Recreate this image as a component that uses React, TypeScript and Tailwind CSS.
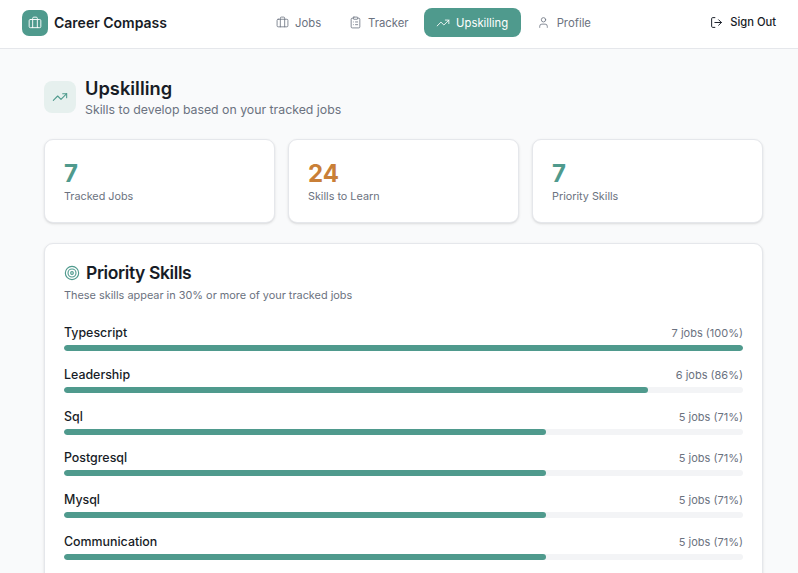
import { Briefcase, ClipboardList, TrendingUp, User, LogOut, Target } from "lucide-react";

const skills = [
  ["Typescript", "7 jobs (100%)", 100],
  ["Leadership", "6 jobs (86%)", 86],
  ["Sql", "5 jobs (71%)", 71],
  ["Postgresql", "5 jobs (71%)", 71],
  ["Mysql", "5 jobs (71%)", 71],
  ["Communication", "5 jobs (71%)", 71],
] as const;

const stats = [
  ["7", "Tracked Jobs", "text-[#4f9a8d]"],
  ["24", "Skills to Learn", "text-[#c97f37]"],
  ["7", "Priority Skills", "text-[#4f9a8d]"],
] as const;

export default function App() {
  return (
    <div className="h-[573px] overflow-hidden bg-[#f9fafb] font-['Inter',sans-serif] text-[#171c26]">
      <header className="flex h-[49px] items-center border-b border-[#e5e7eb] bg-white pb-[3px] pl-[22px] pr-[22px]">
        <div className="flex w-[240px] items-center gap-[6px]">
          <div className="flex h-[26px] w-[26px] items-center justify-center rounded-[7px] bg-[#4f9a8d] text-white">
            <Briefcase size={14} strokeWidth={1.6} />
          </div>
          <span className="text-[14px] font-semibold">Career Compass</span>
        </div>
        <nav className="flex items-center text-[11.3px] font-normal leading-[15px] text-[#6b7280]">
          <a className="flex h-[29px] items-center gap-[6px] px-[14px]"><Briefcase size={13} strokeWidth={1.5} /><span className="mt-px">Jobs</span></a>
          <a className="flex h-[29px] items-center gap-[6px] px-[14px]"><ClipboardList size={13} strokeWidth={1.5} /><span className="mt-px">Tracker</span></a>
          <a className="ml-px flex h-[29px] items-center gap-[6px] rounded-[8px] bg-[#4f9a8d] px-[12.5px] text-white"><TrendingUp size={14} strokeWidth={1.5} /><span className="mt-px">Upskilling</span></a>
          <a className="flex h-[29px] items-center gap-[7px] px-[16px]"><User size={13} strokeWidth={1.5} /><span className="mt-px">Profile</span></a>
        </nav>
        <button className="ml-auto flex items-center gap-[7px] whitespace-nowrap text-[11.2px] font-medium">
          <LogOut size={13} strokeWidth={1.8} />Sign Out
        </button>
      </header>
      <main className="flex flex-col gap-5 pl-11 pr-[35px] pt-[30px]">
        <div className="flex items-start gap-[9px]">
          <div className="mt-[2px] flex h-8 w-8 items-center justify-center rounded-[8px] bg-[#e6f0ee] text-[#4f9a8d]">
            <TrendingUp size={16} strokeWidth={1.6} />
          </div>
          <div>
            <h1 className="text-[18.3px] font-semibold leading-[18px]">Upskilling</h1>
            <p className="mt-[4px] text-[12.3px] leading-[18px] text-[#6b7280]">Skills to develop based on your tracked jobs</p>
          </div>
        </div>
        <div className="grid grid-cols-3 gap-[13px]">
          {stats.map(([n, l, c]) => (
            <div key={l} className="h-[84px] rounded-[9px] border border-[#e5e7eb] bg-white px-[19px] pt-[19px] shadow-sm">
              <div className={`text-[24px] font-bold leading-[30px] ${c}`}>{n}</div>
              <div className="text-[10.8px] leading-[16px] text-[#6b7280]">{l}</div>
            </div>
          ))}
        </div>
        <section className="rounded-[9px] border border-[#e5e7eb] bg-white px-[19px] pb-10 pt-[18px] shadow-sm">
          <div className="flex items-center gap-[6px]">
            <Target size={16} strokeWidth={1.7} className="text-[#4f9a8d]" />
            <h2 className="text-[17.5px] font-semibold leading-[22px] tracking-[-0.4px]">Priority Skills</h2>
          </div>
          <p className="mt-[3px] text-[10.9px] leading-[16px] text-[#6b7280]">These skills appear in 30% or more of your tracked jobs</p>
          <div className="mt-[19px] flex flex-col gap-[12.75px]">
            {skills.map(([name, info, pct]) => (
              <div key={name}>
                <div className="flex items-center justify-between">
                  <span className="text-[12.4px] font-medium leading-[22px]">{name}</span>
                  <span className="text-[11px] leading-[22px] text-[#6b7280]">{info}</span>
                </div>
                <div className="mt-[1px] h-[6px] overflow-hidden rounded-full bg-[#f3f4f6]">
                  <div className="h-full rounded-full bg-[#4f9a8d]" style={{ width: `${pct}%` }} />
                </div>
              </div>
            ))}
          </div>
        </section>
      </main>
    </div>
  );
}
